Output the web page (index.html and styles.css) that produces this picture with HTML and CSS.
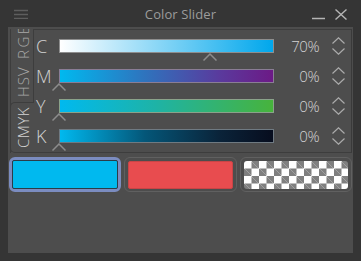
FILE: index.html
```html
<!DOCTYPE html>
<html>
<head>
<meta charset="utf-8">
<link rel="stylesheet" href="styles.css">
</head>
<body>
<div class="window">
  <div class="titlebar">
    <svg class="menu-icon" width="14" height="10" viewBox="0 0 14 10"><path d="M0 1.5H14M0 5.5H14M0 9.5H14" stroke="#5e5e5e" stroke-width="1.3"/></svg>
    <div class="title">Color Slider</div>
    <div class="win-btns">
      <svg width="14" height="12" viewBox="0 0 14 12"><path d="M0 10.5H13" stroke="#b4b4b4" stroke-width="1.5"/></svg>
      <svg width="12" height="11" viewBox="0 0 12 11"><path d="M0.5 0.5L11.5 10.5M11.5 0.5L0.5 10.5" stroke="#b4b4b4" stroke-width="1.4"/></svg>
    </div>
  </div>
  <div class="panel">
    <div class="editor">
      <div class="tabs">
        <div class="tab tab-rgb">RGB</div>
        <div class="tab tab-hsv">HSV</div>
        <div class="tab tab-cmyk active">CMYK</div>
      </div>
      <div class="sliders">
        <div class="row">
          <div class="label">C</div>
          <div class="track">
            <div class="bar bar-c"></div>
            <svg class="caret" style="left:70%" width="14" height="8" viewBox="0 0 14 8"><path d="M0.5 7.5L7 1L13.5 7.5" fill="none" stroke="#8c8c8c" stroke-width="1.5"/></svg>
          </div>
          <div class="pct">70%</div>
          <div class="spin">
            <svg width="13" height="18" viewBox="0 0 13 18"><path d="M0.5 6.5L6.5 0.8L12.5 6.5M0.5 11.5L6.5 17.2L12.5 11.5" fill="none" stroke="#ababab" stroke-width="1.2"/></svg>
          </div>
        </div>
        <div class="row">
          <div class="label">M</div>
          <div class="track">
            <div class="bar bar-m"></div>
            <svg class="caret" style="left:0%" width="14" height="8" viewBox="0 0 14 8"><path d="M0.5 7.5L7 1L13.5 7.5" fill="none" stroke="#8c8c8c" stroke-width="1.5"/></svg>
          </div>
          <div class="pct">0%</div>
          <div class="spin">
            <svg width="13" height="18" viewBox="0 0 13 18"><path d="M0.5 6.5L6.5 0.8L12.5 6.5M0.5 11.5L6.5 17.2L12.5 11.5" fill="none" stroke="#ababab" stroke-width="1.2"/></svg>
          </div>
        </div>
        <div class="row">
          <div class="label">Y</div>
          <div class="track">
            <div class="bar bar-y"></div>
            <svg class="caret" style="left:0%" width="14" height="8" viewBox="0 0 14 8"><path d="M0.5 7.5L7 1L13.5 7.5" fill="none" stroke="#8c8c8c" stroke-width="1.5"/></svg>
          </div>
          <div class="pct">0%</div>
          <div class="spin">
            <svg width="13" height="18" viewBox="0 0 13 18"><path d="M0.5 6.5L6.5 0.8L12.5 6.5M0.5 11.5L6.5 17.2L12.5 11.5" fill="none" stroke="#ababab" stroke-width="1.2"/></svg>
          </div>
        </div>
        <div class="row">
          <div class="label">K</div>
          <div class="track">
            <div class="bar bar-k"></div>
            <svg class="caret" style="left:0%" width="14" height="8" viewBox="0 0 14 8"><path d="M0.5 7.5L7 1L13.5 7.5" fill="none" stroke="#8c8c8c" stroke-width="1.5"/></svg>
          </div>
          <div class="pct">0%</div>
          <div class="spin">
            <svg width="13" height="18" viewBox="0 0 13 18"><path d="M0.5 6.5L6.5 0.8L12.5 6.5M0.5 11.5L6.5 17.2L12.5 11.5" fill="none" stroke="#ababab" stroke-width="1.2"/></svg>
          </div>
        </div>
      </div>
    </div>
    <div class="swatches">
      <div class="swatch selected"><div class="fill fill-main"></div></div>
      <div class="swatch"><div class="fill fill-sub"></div></div>
      <div class="swatch"><div class="fill fill-clear"></div></div>
    </div>
  </div>
</div>
</body>
</html>
```
FILE: styles.css
```css
* { box-sizing: border-box; }
html, body { margin: 0; padding: 0; }
body {
  width: 361px;
  height: 261px;
  background: #353535;
  font-family: "Open Sans", "Noto Sans", sans-serif;
  overflow: hidden;
}
.window { display: flex; flex-direction: column; height: 261px; }
.titlebar {
  height: 27px;
  display: grid;
  grid-template-columns: 1fr auto 1fr;
  align-items: center;
  padding: 0 14px 0 14px;
}
.menu-icon { margin-top: 1px; }
.title {
  color: #9c9c9c;
  font-size: 13px;
  letter-spacing: 0.1px;
  margin-top: 1px;
}
.win-btns {
  justify-self: end;
  display: flex;
  align-items: flex-end;
  gap: 9px;
  margin-top: 1px;
}
.panel {
  margin: 0 8px;
  height: 226px;
  background: #4d4d4d;
  padding: 2px 1px 0 2px;
}
.editor {
  display: flex;
  height: 124px;
}
.tabs {
  width: 24px;
  height: 124px;
  display: flex;
  flex-direction: column;
  justify-content: flex-end;
  overflow: hidden;
  border-left: 1px solid #3d3d3d;
  position: relative;
  z-index: 1;
  margin-right: -1px;
}
.tab {
  flex: none;
  writing-mode: vertical-rl;
  transform: rotate(180deg);
  text-align: center;
  font-size: 15px;
  font-weight: 300;
  line-height: 24px;
  color: #a9a9a9;
  letter-spacing: 1px;
  white-space: nowrap;
}
.tab-rgb { height: 40px; text-align: start; padding-top: 3px; letter-spacing: 2.5px; }
.tab-hsv { height: 40px; }
.tab-cmyk {
  height: 51px;
  color: #d2d2d2;
  background: #4d4d4d;
  border-top: 1px solid #3d3d3d;
  border-bottom: 1px solid #3d3d3d;
  border-right: 1px solid #3d3d3d;
  border-radius: 0 5px 5px 0;
  letter-spacing: 0.5px;
}
.tabs .tab-cmyk { margin-left: -1px; width: 25px; }
.sliders {
  flex: 1;
  border: 1px solid #3d3d3d;
  border-right-color: #3a3a3a;
  display: flex;
  flex-direction: column;
}
.row {
  height: 30px;
  display: grid;
  grid-template-columns: 25px 215px 47px 1fr;
  align-items: start;
}
.label {
  color: #d2d2d2;
  font-size: 18px;
  font-weight: 300;
  line-height: 20px;
  padding: 6px 0 0 2px;
}
.track { position: relative; height: 30px; padding-top: 9px; }
.bar {
  height: 14px;
  border: 1px solid #8e8e8e;
}
.bar-c { background: linear-gradient(to right, #ffffff, #00a7ec); }
.bar-m { background: linear-gradient(to right, #00b9ef, #2f73bd 40%, #5a3a9d 75%, #6c1a86); border-color: #8a7d95; }
.bar-y { background: linear-gradient(to right, #00b9ef, #1eb3a6 45%, #47b33c); border-color: #8aa28a; }
.bar-k { background: linear-gradient(to right, #00b9ef, #045678 40%, #0a2339 75%, #070d1e); border-color: #6f7a82; }
.caret { position: absolute; top: 23px; margin-left: -7px; }
.pct {
  text-align: right;
  padding-right: 2px;
  color: #d4d4d4;
  font-size: 15px;
  font-weight: 300;
  line-height: 20px;
  padding-top: 6px;
  letter-spacing: -0.5px;
}
.spin { padding: 7px 0 0 11px; }
.spin svg { display: block; }
.swatches {
  display: grid;
  grid-template-columns: 1fr 1fr 1fr;
  gap: 3px;
  margin-top: 4px;
  height: 35px;
  margin-left: -1px;
}
.swatch {
  border: 1.5px solid #606060;
  border-radius: 6px;
  padding: 2.5px 3px;
}
.swatch.selected {
  border: 3px solid #7b8cc0;
  padding: 0;
}
.fill { height: 100%; border-radius: 2px; }
.fill-main { background: #00b9ef; border: 1px solid #2b3c48; }
.fill-sub { background: #e84c4f; border: 1px solid #c94446; }
.fill-clear {
  background-color: #ffffff;
  background-image:
    linear-gradient(45deg, #7f7f7f 25%, transparent 25%, transparent 75%, #7f7f7f 75%),
    linear-gradient(45deg, #7f7f7f 25%, transparent 25%, transparent 75%, #7f7f7f 75%);
  background-size: 15px 15px;
  background-position: 0 0, 7.5px 7.5px;
  border-radius: 3px;
}
```
